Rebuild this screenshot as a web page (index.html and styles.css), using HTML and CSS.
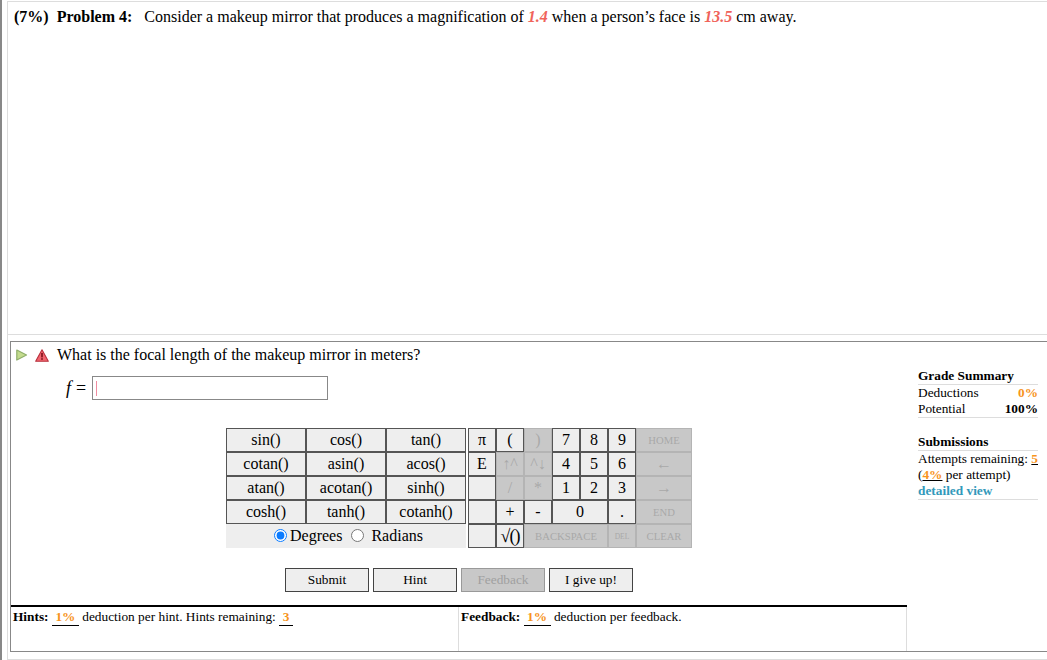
FILE: index.html
```html
<!doctype html>
<html>
  <head>
    <meta charset="UTF-8" />
    <title>Problem 4</title>
    <link rel="stylesheet" href="styles.css">
  </head>
  <body>
    <div class="page">
      <div class="problem">
        <div class="statement">
          <span class="pct">(7%)</span>
          <b class="prob-title">Problem 4:</b>
          Consider a makeup mirror that produces a magnification of <i class="given">1.4</i> when a person’s face is <i class="given">13.5</i> cm away.
        </div>

        <div class="part">
          <div class="part-main">
            <div class="question">
              <svg class="icon" width="12" height="12" viewBox="0 0 12 12">
                <path d="M0.8 1 L10.5 6 L0.8 11 Z" fill="#c4dc8e" stroke="#8fae6a" stroke-width="1.2" stroke-linejoin="round" />
              </svg>
              <svg class="icon icon-warn" width="14" height="13" viewBox="0 0 14 13">
                <path d="M7 0.8 L13.3 12.2 L0.7 12.2 Z" fill="#f0646e" stroke="#b8303c" stroke-width="1.1" stroke-linejoin="round" />
                <rect x="6.2" y="4" width="1.6" height="4.4" fill="#7a1018" />
                <rect x="6.2" y="9.2" width="1.6" height="1.6" fill="#7a1018" />
              </svg>
              <span>What is the focal length of the makeup mirror in meters?</span>
            </div>

            <div class="answer-row">
              <span class="var"><i>f</i><span class="eq">=</span></span>
              <div class="answer-box"><span class="caret"></span></div>
            </div>

            <div class="keypad">
              <div class="keys-fn">
                <div class="key">sin()</div>
                <div class="key">cos()</div>
                <div class="key">tan()</div>
                <div class="key">cotan()</div>
                <div class="key">asin()</div>
                <div class="key">acos()</div>
                <div class="key">atan()</div>
                <div class="key">acotan()</div>
                <div class="key">sinh()</div>
                <div class="key">cosh()</div>
                <div class="key">tanh()</div>
                <div class="key">cotanh()</div>
                <div class="angle-mode">
                  <input type="radio" name="angle" checked /><label>Degrees</label>
                  <input type="radio" name="angle" class="radio-2" /><label>Radians</label>
                </div>
              </div>
              <div class="keys-num">
                <div class="key">π</div>
                <div class="key">(</div>
                <div class="key off">)</div>
                <div class="key">7</div>
                <div class="key">8</div>
                <div class="key">9</div>
                <div class="key off small">HOME</div>

                <div class="key">E</div>
                <div class="key off">↑^</div>
                <div class="key off">^↓</div>
                <div class="key">4</div>
                <div class="key">5</div>
                <div class="key">6</div>
                <div class="key off">←</div>

                <div class="key"></div>
                <div class="key off">/</div>
                <div class="key off">*</div>
                <div class="key">1</div>
                <div class="key">2</div>
                <div class="key">3</div>
                <div class="key off">→</div>

                <div class="key"></div>
                <div class="key">+</div>
                <div class="key">-</div>
                <div class="key span-2">0</div>
                <div class="key">.</div>
                <div class="key off small">END</div>

                <div class="key"></div>
                <div class="key sqrt">√()</div>
                <div class="key off small span-3">BACKSPACE</div>
                <div class="key off tiny">DEL</div>
                <div class="key off small">CLEAR</div>
              </div>
            </div>

            <div class="actions">
              <div class="btn">Submit</div>
              <div class="btn">Hint</div>
              <div class="btn btn-off">Feedback</div>
              <div class="btn">I give up!</div>
            </div>

            <div class="notes">
              <div class="note note-hints">
                <b>Hints:</b> <u class="amt">1%</u> deduction per hint. Hints remaining: <u class="amt">3</u>
              </div>
              <div class="note note-feedback">
                <b>Feedback:</b> <u class="amt">1%</u> deduction per feedback.
              </div>
            </div>
          </div>

          <div class="summary">
            <div class="sum-title">Grade Summary</div>
            <div class="sum-rows">
              <div class="sum-row"><span>Deductions</span><b class="orange">0%</b></div>
              <div class="sum-row"><span>Potential</span><b>100%</b></div>
            </div>
            <div class="sum-title sum-second">Submissions</div>
            <div class="sum-rows">
              <div class="sum-row"><span>Attempts remaining:</span><u class="orange bold">5</u></div>
              <div class="sum-line">(<u class="orange bold">4%</u> per attempt)</div>
              <div class="sum-line detail">detailed view</div>
            </div>
          </div>
        </div>
      </div>
    </div>
  </body>
</html>
```

FILE: styles.css
```css
body {
  font-family: "Liberation Serif", "Times New Roman", serif;
  margin: 0;
  height: 660px;
  overflow: hidden;
  background: white;
  color: black;
}

.page {
  height: 659px;
  padding: 1px 0 0 5px;
  border-left: 2px solid #888;
}

.problem {
  height: 657px;
  border-top: 1px solid #ddd;
  border-left: 1px solid #ddd;
  border-bottom: 1px solid #ddd;
}

.statement {
  height: 333px;
  box-sizing: border-box;
  padding: 6px 0 0 6px;
  border-bottom: 1px solid #ddd;
  font-size: 16px;
  line-height: 18px;
}

.pct {
  font-weight: bold;
  margin-right: 4px;
}

.prob-title {
  margin-right: 8px;
}

.given {
  color: #f0635a;
  font-weight: bold;
}

.part {
  display: flex;
  height: 309px;
  margin: 6px 0 0 2px;
  border-top: 1px solid #888;
  border-left: 1px solid #888;
  border-bottom: 1px solid #888;
}

.part-main {
  width: 896px;
  display: flex;
  flex-direction: column;
}

.question {
  display: flex;
  align-items: center;
  height: 18px;
  padding: 4px 0 0 5px;
  font-size: 16px;
}

.icon-warn {
  margin: 0 8px 0 7px;
}

.answer-row {
  display: flex;
  align-items: center;
  height: 24px;
  margin: 12px 0 0 55px;
}

.var {
  width: 26px;
  font-size: 18px;
  line-height: 24px;
}

.eq {
  margin-left: 5px;
}

.answer-box {
  width: 231px;
  height: 22px;
  border: 1px solid #888;
  display: flex;
  align-items: center;
  padding-left: 3px;
}

.caret {
  width: 1px;
  height: 15px;
  background: #f08ca0;
}

.keypad {
  display: flex;
  justify-content: center;
  gap: 2px;
  margin-top: 28px;
}

.keys-fn {
  display: grid;
  grid-template-columns: repeat(3, 80px);
  grid-auto-rows: 24px;
}

.keys-num {
  display: grid;
  grid-template-columns: repeat(6, 28px) 56px;
  grid-auto-rows: 24px;
}

.key {
  box-sizing: border-box;
  display: flex;
  align-items: center;
  justify-content: center;
  background: #eee;
  border: 1px solid #555;
  font-size: 16px;
}

.key.off {
  background: #c8c8c8;
  border-color: #b4b4b4;
  color: #a8a8a8;
}

.key.small {
  font-size: 10.67px;
}

.key.tiny {
  font-size: 7.5px;
}

.span-2 {
  grid-column: span 2;
}

.span-3 {
  grid-column: span 3;
}

.key.sqrt {
  font-size: 18px;
  letter-spacing: -1px;
}

.angle-mode {
  grid-column: span 3;
  display: flex;
  align-items: center;
  justify-content: center;
  padding: 0 0 1px 5px;
  background: #eee;
  font-size: 16px;
}

.angle-mode input {
  margin: 0 3px 0 0;
  accent-color: #0a7bff;
}

.angle-mode .radio-2 {
  margin: 0 7px 0 9px;
}

.actions {
  display: flex;
  justify-content: center;
  gap: 4px;
  margin-top: 20px;
}

.btn {
  box-sizing: border-box;
  width: 84px;
  height: 24px;
  display: flex;
  align-items: center;
  justify-content: center;
  background: #eee;
  border: 1px solid #444;
  font-size: 13.33px;
}

.btn-off {
  background: #c8c8c8;
  border-color: #999;
  color: #a0a0a0;
}

.notes {
  display: flex;
  flex: 1;
  margin-top: 13px;
  border-top: 2px solid black;
  font-size: 13.33px;
}

.note {
  padding: 2px 0 0 2px;
  line-height: 16px;
}

.note-hints {
  width: 446px;
  border-right: 1px solid #ddd;
}

.note-feedback {
  width: 446px;
  border-right: 1px solid #ddd;
}

.amt {
  display: inline-block;
  padding: 0 3.5px;
  color: #f7941d;
  font-weight: bold;
  text-decoration: none;
  border-bottom: 1px solid black;
}

.summary {
  width: 120px;
  margin-left: 11px;
  padding-top: 26px;
  font-size: 13.33px;
  line-height: 16px;
}

.sum-title {
  font-weight: bold;
  border-bottom: 1px solid #ddd;
}

.sum-second {
  margin-top: 16px;
}

.sum-rows {
  border-bottom: 1px solid #ddd;
}

.sum-row {
  display: flex;
  justify-content: space-between;
}

.orange {
  color: #f7941d;
  text-decoration-color: black;
}

.bold {
  font-weight: bold;
}

.detail {
  color: #3399bb;
  font-weight: bold;
}
```
